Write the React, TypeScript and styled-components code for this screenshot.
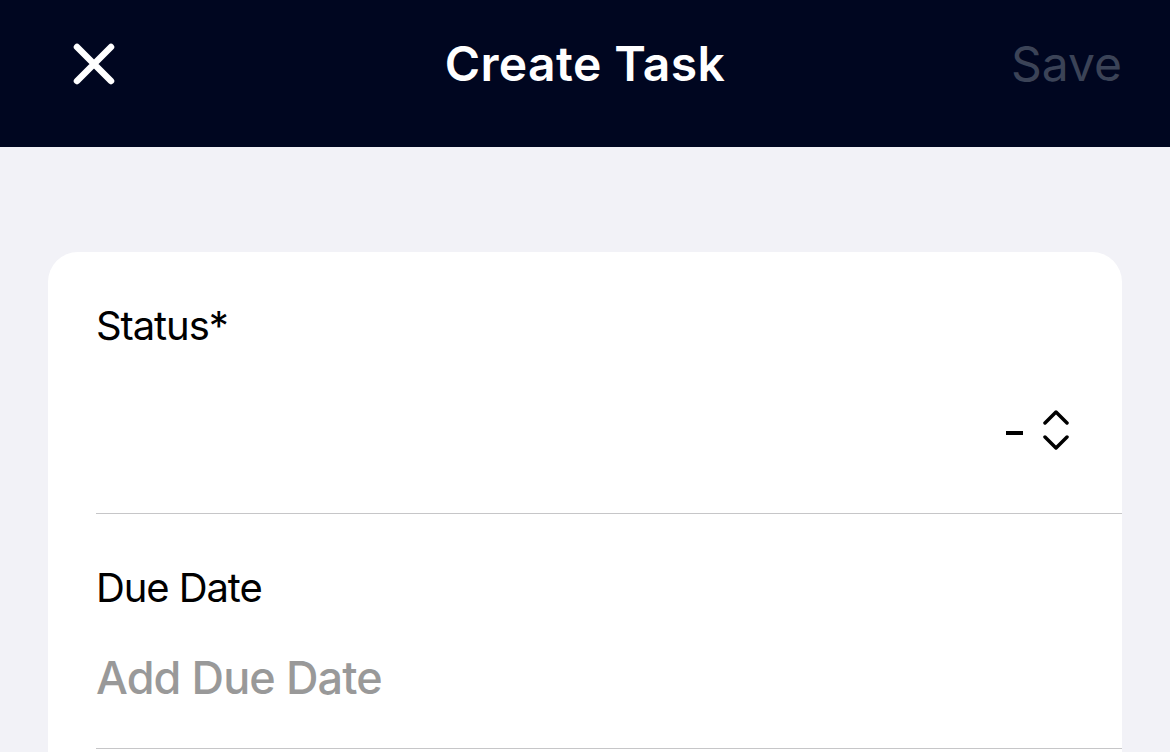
import React from "react";
import styled, { createGlobalStyle } from "styled-components";

const Global = createGlobalStyle`
  html, body { margin: 0; padding: 0; background: #f2f2f7; }
  body { font-family: Inter, "Noto Sans", sans-serif; overflow: hidden; }
`;

const Page = styled.div`
  width: 1170px;
  height: 752px;
  background: #f2f2f7;
  display: flex;
  flex-direction: column;
  overflow: hidden;
`;

const Header = styled.header`
  height: 147px;
  flex: 0 0 auto;
  background: #000620;
  display: grid;
  grid-template-columns: 1fr auto 1fr;
  align-items: center;
  padding: 0 50px 20px 50px;
  box-sizing: border-box;
`;

const CloseButton = styled.button`
  justify-self: start;
  margin-left: 22px;
  background: none;
  border: none;
  padding: 0;
  width: 44px;
  height: 44px;
  display: flex;
  align-items: center;
  justify-content: center;
`;

const Title = styled.h1`
  margin: 0;
  color: #ffffff;
  font-size: 48px;
  font-weight: 600;
  letter-spacing: 0.4px;
`;

const SaveButton = styled.button`
  justify-self: end;
  background: none;
  border: none;
  padding: 0;
  margin-right: -2px;
  color: #3b4357;
  font-family: Inter, sans-serif;
  font-size: 48px;
  font-weight: 400;
`;

const Body = styled.main`
  flex: 1;
  padding: 105px 48px 0 48px;
`;

const Card = styled.section`
  background: #ffffff;
  border-radius: 30px 30px 0 0;
  padding-left: 48px;
  height: 600px;
`;

const Field = styled.div<{ $h: number }>`
  height: ${(p) => p.$h}px;
  border-bottom: 1px solid #c6c6c8;
  box-sizing: border-box;
  display: flex;
  flex-direction: column;
  padding-right: 52px;
`;

const Label = styled.div<{ $top: number }>`
  margin-top: ${(p) => p.$top}px;
  font-size: 40px;
  color: #000;
  letter-spacing: -1.1px;
  line-height: 48px;
`;

const ValueRow = styled.div`
  display: flex;
  justify-content: flex-end;
  align-items: center;
  gap: 19px;
  margin-top: 60px;
`;

const Dash = styled.span`
  width: 17px;
  height: 4px;
  margin-top: 5px;
  background: #000;
`;

const Placeholder = styled.div`
  margin-top: 39px;
  font-size: 45px;
  font-weight: 450;
  color: #999999;
  letter-spacing: -0.9px;
  line-height: 54px;
`;

export default function App() {
  return (
    <Page>
      <Global />
      <Header>
        <CloseButton aria-label="Close">
          <svg width="44" height="44" viewBox="0 0 44 44">
            <path d="M5 5 L39 39 M39 5 L5 39" stroke="#fff" strokeWidth="6.5" strokeLinecap="round" />
          </svg>
        </CloseButton>
        <Title>Create Task</Title>
        <SaveButton>Save</SaveButton>
      </Header>
      <Body>
        <Card>
          <Field $h={262}>
            <Label $top={50}>Status*</Label>
            <ValueRow>
              <Dash />
              <svg width="28" height="40" viewBox="0 0 28 40">
                <path d="M3 13 L14 2 L25 13 M3 27 L14 38 L25 27" fill="none" stroke="#000" strokeWidth="3.5" strokeLinecap="round" strokeLinejoin="round" />
              </svg>
            </ValueRow>
          </Field>
          <Field $h={235}>
            <Label $top={50}>Due Date</Label>
            <Placeholder>Add Due Date</Placeholder>
          </Field>
        </Card>
      </Body>
    </Page>
  );
}
